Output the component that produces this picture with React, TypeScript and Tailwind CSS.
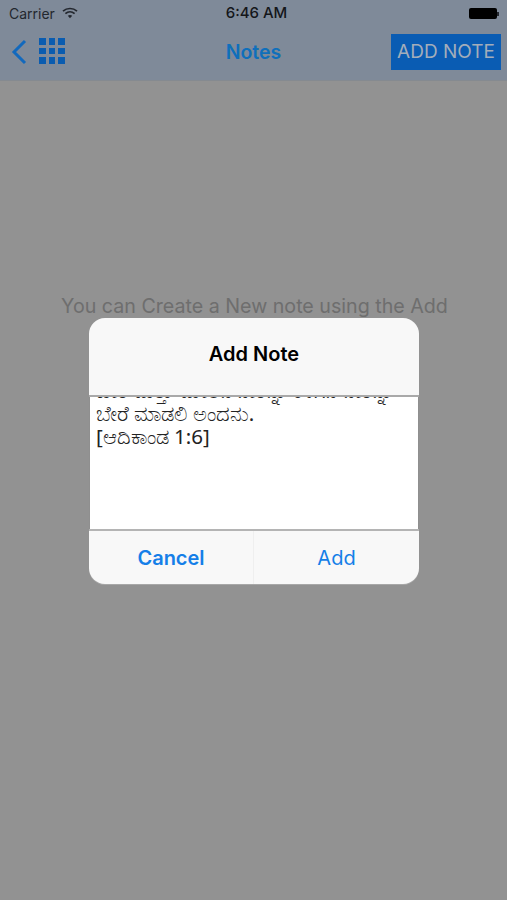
const sans = "font-['Inter','Liberation_Sans',sans-serif]";

const WifiIcon = () => (
  <svg width="16" height="12" viewBox="0 0 16 12" className="text-[#23272e] -mt-[2px]">
    <path d="M1 4.2C5 .6 11 .6 15 4.2" fill="none" stroke="currentColor" strokeWidth="1.7" />
    <path d="M3.4 6.6c2.7-2.3 6.5-2.3 9.2 0" fill="none" stroke="currentColor" strokeWidth="1.7" />
    <path d="M5.8 8.8c1.3-1 3.1-1 4.4 0L8 11.2z" fill="currentColor" />
  </svg>
);

const GridIcon = () => (
  <div className="grid grid-cols-3 gap-[3px] w-[26px] -mt-[2px]">
    {Array.from({ length: 9 }).map((_, i) => (
      <div key={i} className="w-[6.5px] h-[6.5px] bg-[#0a5cb0]" />
    ))}
  </div>
);

const BackIcon = () => (
  <svg width="16" height="26" viewBox="0 0 16 26">
    <path d="M14 2 3 13l11 11" fill="none" stroke="#1269bd" strokeWidth="3" />
  </svg>
);

const App = () => {
  return (
    <div className={`relative w-[507px] h-[900px] overflow-hidden bg-[#929292] ${sans}`}>
      <header className="h-[81px] bg-[#7f8a99] border-b border-[#858a90]">
        <div className="relative h-[27px] flex items-center justify-between pl-[9px] pr-[8px]">
          <div className="flex items-center gap-[7px] text-[14px] text-[#23272e]">
            <span>Carrier</span>
            <WifiIcon />
          </div>
          <span className="absolute left-[6px] right-0 text-center text-[15px] font-medium text-[#14161a]">6:46 AM</span>
          <div className="flex items-center">
            <div className="w-[28px] h-[11px] rounded-[2px] bg-black" />
            <div className="w-[2px] h-[4px] bg-[#23272e]" />
          </div>
        </div>
        <div className="relative h-[50px] flex items-center justify-between pl-[11px] pr-[6px]">
          <div className="flex items-center gap-[12px]">
            <BackIcon />
            <GridIcon />
          </div>
          <span className="absolute left-0 right-0 pt-[2px] text-center text-[19.5px] font-semibold text-[#0f6fbb]">Notes</span>
          <button className="relative w-[110px] h-[36px] bg-[#0a5cb3] text-[#a3adba] text-[19px]">ADD NOTE</button>
        </div>
      </header>

      <p className="mt-[211px] pl-[2px] text-center text-[19.65px] leading-[28px] text-[#6e6e6e]">
        You can Create a New note using the Add
      </p>

      <div className="absolute left-[89px] top-[318px] w-[330px] h-[266px] flex flex-col rounded-[16px] overflow-hidden bg-[#f8f8f8] shadow-[0_1px_0_#a8a8a8]">
        <div className="h-[77px] shrink-0 flex justify-center pt-[24px] text-[20px] leading-[24px] font-semibold text-black">Add Note</div>
        <div className="h-[2px] shrink-0 bg-[#a9a9a9]" />
        <div className="h-[132px] shrink-0 overflow-hidden bg-white border-x border-[#8f8f8f] px-[6px] text-[20.5px] leading-[23px] text-[#222] font-['Noto_Sans','DejaVu_Sans',sans-serif]">
          <p className="whitespace-nowrap mt-[-18px]">ಬೇರೆ ಮತ್ತು ಮೇಲಿನ ನೀರನ್ನು ಕೆಳಗಿನ ನೀರನ್ನು</p>
          <p className="whitespace-nowrap">ಬೇರೆ ಮಾಡಲಿ ಅಂದನು.</p>
          <p className="whitespace-nowrap">[ಆದಿಕಾಂಡ 1:6]</p>
        </div>
        <div className="h-[2px] shrink-0 bg-[#b4b4b4]" />
        <div className="flex flex-1 text-[20px] text-[#157fe8]">
          <button className="w-[165px] font-semibold border-r border-[#efefef]">Cancel</button>
          <button className="flex-1">Add</button>
        </div>
      </div>
    </div>
  );
};

export default App;
